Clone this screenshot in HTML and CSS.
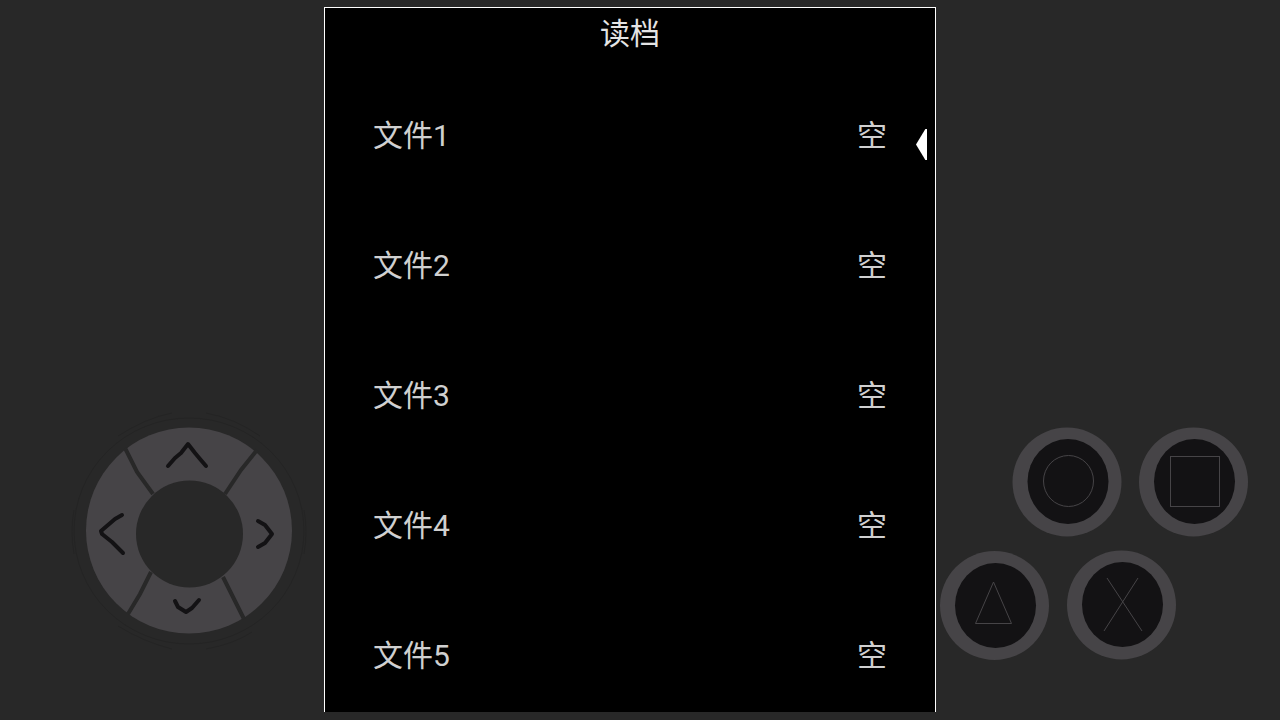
FILE: index.html
```html
<!DOCTYPE html>
<html lang="zh-CN">
<head>
    <meta charset="UTF-8">
    <meta name="viewport" content="width=device-width, initial-scale=1.0">
    <title>读档</title>
    <link rel="stylesheet" href="styles.css">
</head>
<body>
    <div class="console">
        <!-- Direction pad -->
        <div class="side side-left">
            <div class="dpad">
                <svg class="dpad-ring" viewBox="0 0 242 242" aria-hidden="true">
                    <ellipse class="halo" cx="121" cy="121" rx="115" ry="113"/>
                    <path class="halo" d="M50 26Q78 8 104 3M138 3Q166 8 192 26M50 216Q76 232 104 239M138 239Q166 234 184 222M6 100Q2 121 6 144M236 100Q240 121 236 144"/>
                    <circle class="ring" cx="121" cy="120.5" r="103"/>
                    <circle class="hole" cx="121.5" cy="124" r="53.5"/>
                    <path class="split" d="M57 38L69 62L85 84M189 40L173 60L157 84M83 162L72 184L60 204M155 167L165 187L176 209"/>
                </svg>
                <button type="button" class="dir up" aria-label="上">
                    <svg viewBox="0 0 98 54"><path d="M28 38L35 30L41 25L48 16L55 25L60 31L66 38"/></svg>
                </button>
                <button type="button" class="dir left" aria-label="左">
                    <svg viewBox="0 0 54 98"><path d="M36 33L29 37L15 49L16 52L26 60L37 71"/></svg>
                </button>
                <button type="button" class="dir right" aria-label="右">
                    <svg viewBox="0 0 54 98"><path d="M20 39L27 43L34 52L27 61L20 65"/></svg>
                </button>
                <button type="button" class="dir down" aria-label="下">
                    <svg viewBox="0 0 98 54"><path d="M35 21L38 27L46 32L52 28L59 20"/></svg>
                </button>
            </div>
        </div>

        <!-- Load screen -->
        <main class="screen">
            <h1 class="title">读档</h1>
            <ul class="files">
                <li class="file selected"><button type="button"><span>文件1</span><span>空</span></button></li>
                <li class="file"><button type="button"><span>文件2</span><span>空</span></button></li>
                <li class="file"><button type="button"><span>文件3</span><span>空</span></button></li>
                <li class="file"><button type="button"><span>文件4</span><span>空</span></button></li>
                <li class="file"><button type="button"><span>文件5</span><span>空</span></button></li>
            </ul>
        </main>

        <!-- Action buttons -->
        <div class="side side-right">
            <div class="actions">
                <div class="action-row top-row">
                    <button type="button" class="action" aria-label="圆圈">
                        <svg viewBox="0 0 110 110">
                            <circle class="rim" cx="55" cy="55" r="54.5"/>
                            <ellipse class="cap" cx="56" cy="54.5" rx="40.5" ry="42.5"/>
                            <ellipse class="mark" cx="56.5" cy="54" rx="25" ry="25.5"/>
                        </svg>
                    </button>
                    <button type="button" class="action" aria-label="方块">
                        <svg viewBox="0 0 110 110">
                            <circle class="rim" cx="54.5" cy="55" r="54.5"/>
                            <ellipse class="cap" cx="55.5" cy="54.5" rx="40.5" ry="42.5"/>
                            <rect class="mark" x="31.5" y="29.5" width="49" height="50"/>
                        </svg>
                    </button>
                </div>
                <div class="action-row bottom-row">
                    <button type="button" class="action" aria-label="三角">
                        <svg viewBox="0 0 110 110">
                            <circle class="rim" cx="54.5" cy="55.5" r="54.5"/>
                            <ellipse class="cap" cx="55.5" cy="55.5" rx="40.5" ry="42.5"/>
                            <path class="mark" d="M53.5 32L35.5 73.5H71.5Z"/>
                        </svg>
                    </button>
                    <button type="button" class="action" aria-label="叉">
                        <svg viewBox="0 0 110 110">
                            <circle class="rim" cx="54.5" cy="55" r="54.5"/>
                            <ellipse class="cap" cx="55.5" cy="54.5" rx="40.5" ry="42.5"/>
                            <path class="mark" d="M40 28L75 81M71 28L37 81"/>
                        </svg>
                    </button>
                </div>
            </div>
        </div>
    </div>
</body>
</html>
```
FILE: styles.css
```css
* {
    margin: 0;
    padding: 0;
    box-sizing: border-box;
    font-family: Roboto, "Noto Sans CJK SC", sans-serif;
}

body {
    background: #282828;
}

button {
    border: none;
    background: none;
    color: inherit;
    cursor: pointer;
}

svg {
    display: block;
    width: 100%;
    height: 100%;
}

.console {
    display: grid;
    grid-template-columns: 324fr 612fr 344fr;
    height: 100vh;
}

.side {
    display: flex;
    align-items: flex-end;
}

/* direction pad */
.side-left {
    justify-content: flex-end;
    padding: 0 32px 86px 0;
}

.dpad {
    position: relative;
    display: grid;
    grid-template: 54px 98px 54px / 54px 98px 54px;
}

.dpad-ring {
    position: absolute;
    top: -18px;
    left: -18px;
    width: 242px;
    height: 242px;
}

.ring {
    fill: #464447;
}

.hole {
    fill: #282828;
}

.halo {
    fill: none;
    stroke: #242424;
}

.split {
    fill: none;
    stroke: #282828;
    stroke-width: 4;
}

.dir {
    position: relative;
}

.dir path {
    fill: none;
    stroke: #131214;
    stroke-width: 4;
    stroke-linecap: round;
    stroke-linejoin: round;
}

.up {
    grid-area: 1 / 2;
}

.left {
    grid-area: 2 / 1;
}

.right {
    grid-area: 2 / 3;
}

.down {
    grid-area: 3 / 2;
}

/* load screen */
.screen {
    display: flex;
    flex-direction: column;
    margin: 7px 0 8px;
    border: 1px solid #fff;
    border-bottom: none;
    background: #000;
    color: #d0d0d0;
    overflow: hidden;
}

.title {
    flex: none;
    padding-bottom: 10px;
    color: #e4e4e4;
    font-size: 30px;
    font-weight: 400;
    line-height: 52px;
    text-align: center;
}

.files {
    list-style: none;
}

.file {
    position: relative;
}

.file button {
    display: flex;
    justify-content: space-between;
    align-items: center;
    width: 100%;
    height: 130px;
    padding: 2px 48px 0;
    font-size: 30px;
    line-height: 50px;
}

.selected::after {
    content: "";
    position: absolute;
    top: 59px;
    right: 8px;
    width: 11px;
    height: 31px;
    background: #fff;
    clip-path: polygon(0 50%, 85% 0, 100% 0, 100% 100%, 85% 100%);
}

/* action buttons */
.side-right {
    padding: 0 0 60px 4px;
}

.actions {
    display: flex;
    flex-direction: column;
    gap: 13px;
    width: 309px;
}

.action-row {
    display: flex;
    gap: 17px;
}

.top-row {
    justify-content: flex-end;
}

.action {
    width: 110px;
    height: 110px;
    border-radius: 50%;
}

.rim {
    fill: #464447;
}

.cap {
    fill: #131214;
}

.mark {
    fill: none;
    stroke: #464447;
}
```
